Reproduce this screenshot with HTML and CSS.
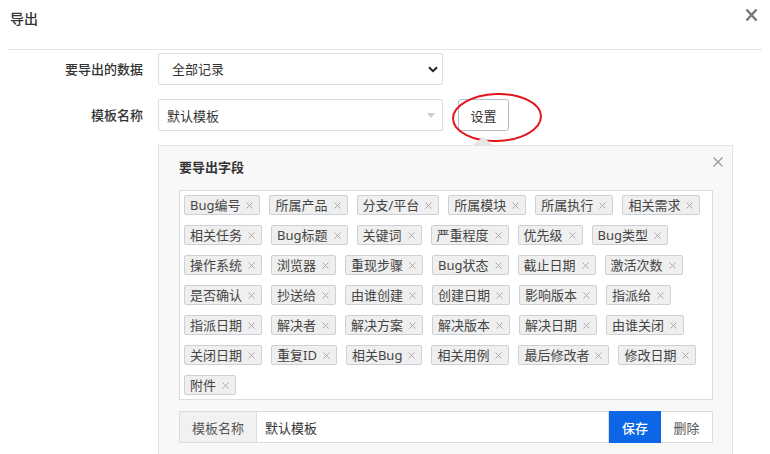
FILE: index.html
```html
<!DOCTYPE html>
<html lang="zh-CN">
<head>
<meta charset="utf-8">
<title>导出</title>
<link rel="stylesheet" href="styles.css">
</head>
<body>
<div class="dialog">
  <div class="dialog-header">
    <h4 class="dialog-title">导出</h4>
    <button class="dialog-close" type="button" aria-label="关闭">
      <svg width="13" height="14" viewBox="0 0 13 14"><path d="M1.5 1.5L11.5 12.5M11.5 1.5L1.5 12.5" stroke="#777" stroke-width="2.4" fill="none"/></svg>
    </button>
  </div>
  <div class="dialog-body">
    <div class="form-row">
      <label class="form-label">要导出的数据</label>
      <div class="select-wrap">
        <select class="form-select"><option>全部记录</option></select>
        <svg class="select-arrow" width="10" height="7" viewBox="0 0 10 7"><path d="M1 1.2L5 5.2L9 1.2" stroke="#222" stroke-width="2" fill="none"/></svg>
      </div>
    </div>
    <div class="form-row">
      <label class="form-label">模板名称</label>
      <div class="chosen"><span>默认模板</span><span class="chosen-caret"></span></div>
      <div class="setting-wrap">
        <button class="btn" type="button">设置</button>
        <svg class="annot" width="92" height="52" viewBox="0 0 92 52"><ellipse cx="46" cy="25.5" rx="44" ry="23.5" transform="rotate(-2 46 25.5)" stroke="#e3161e" stroke-width="2" fill="none"/></svg>
      </div>
    </div>
    <div class="form-row form-row-top">
      <div class="form-label"></div>
      <div class="panel">
        <span class="panel-arrow"></span>
        <button class="panel-close" type="button" aria-label="关闭">
          <svg width="10" height="10" viewBox="0 0 10 10"><path d="M0.5 0.5L9.5 9.5M9.5 0.5L0.5 9.5" stroke="#999" stroke-width="1.2" fill="none"/></svg>
        </button>
        <div class="panel-title">要导出字段</div>
        <div class="tags" id="tags"></div>
        <div class="input-group">
          <span class="addon">模板名称</span>
          <span class="group-input">默认模板</span>
          <button class="btn-save" type="button">保存</button>
          <button class="btn-delete" type="button">删除</button>
        </div>
      </div>
    </div>
  </div>
</div>
<script>
  var fields = ["Bug编号","所属产品","分支/平台","所属模块","所属执行","相关需求",
    "相关任务","Bug标题","关键词","严重程度","优先级","Bug类型",
    "操作系统","浏览器","重现步骤","Bug状态","截止日期","激活次数",
    "是否确认","抄送给","由谁创建","创建日期","影响版本","指派给",
    "指派日期","解决者","解决方案","解决版本","解决日期","由谁关闭",
    "关闭日期","重复ID","相关Bug","相关用例","最后修改者","修改日期","附件"];
  var box = document.getElementById("tags");
  fields.forEach(function (f) {
    var t = document.createElement("span");
    t.className = "tag";
    t.innerHTML = '<span class="tag-text"></span><svg class="tag-remove" width="7" height="7" viewBox="0 0 7 7"><path d="M0.5 0.5L6.5 6.5M6.5 0.5L0.5 6.5" stroke="#aaa" stroke-width="1" fill="none"/></svg>';
    t.firstChild.textContent = f;
    box.appendChild(t);
  });
</script>
</body>
</html>
```
FILE: styles.css
```css
* { box-sizing: border-box; }
html, body { margin: 0; padding: 0; background: #fff; }
body {
  font-family: "Noto Sans", "Noto Sans CJK SC", sans-serif;
  font-size: 13px;
  color: #333;
  overflow: hidden;
}
button { font-family: inherit; font-size: inherit; cursor: pointer; }

.dialog { padding: 0 8px; }
.dialog-header {
  display: flex;
  justify-content: space-between;
  align-items: flex-start;
  height: 50px;
  border-bottom: 1px solid #e5e5e5;
}
.dialog-title {
  margin: 0;
  padding: 9px 0 0 2px;
  font-size: 14px;
  line-height: 20px;
  font-weight: 500;
  color: #333;
}
.dialog-close {
  border: 0;
  background: none;
  padding: 0;
  margin: 8px 4px 0 0;
  width: 13px;
  height: 14px;
  display: flex;
}

.dialog-body { padding-top: 3px; }
.form-row { display: flex; align-items: center; }
.form-row + .form-row { margin-top: 14px; }
.form-row-top { align-items: flex-start; }
.form-label {
  flex: none;
  width: 150px;
  padding-right: 15px;
  text-align: right;
  font-weight: 500;
  color: #333;
  line-height: 20px;
}

.select-wrap { position: relative; width: 285px; height: 32px; }
.form-select {
  width: 100%;
  height: 32px;
  appearance: none;
  -webkit-appearance: none;
  border: 1px solid #ddd;
  border-radius: 2px;
  background: #fff;
  padding: 0 0 0 13px;
  font-family: inherit;
  font-size: 13px;
  color: #333;
  outline: none;
}
.select-arrow { position: absolute; right: 5px; top: 13px; pointer-events: none; }

.chosen {
  width: 285px;
  height: 32px;
  border: 1px solid #ddd;
  border-radius: 2px;
  background: #fff;
  display: flex;
  align-items: center;
  justify-content: space-between;
  padding: 0 7px 0 8px;
  color: #333;
}
.chosen-caret {
  width: 0;
  height: 0;
  border-left: 4px solid transparent;
  border-right: 4px solid transparent;
  border-top: 5px solid #d0d0d0;
}

.setting-wrap { position: relative; margin-left: 15px; }
.btn {
  width: 51px;
  height: 32px;
  border: 1px solid #b5bdc9;
  border-radius: 3px;
  background: #fff;
  color: #333;
  padding: 0;
  display: block;
}
.annot { position: absolute; left: -7px; top: -7px; pointer-events: none; overflow: visible; }

.panel {
  position: relative;
  width: 575px;
  border: 1px solid #e3e3e3;
  background: #f8f8f8;
  padding: 11px 19px 20px 20px;
}
.panel-arrow {
  position: absolute;
  left: 314px;
  top: -9px;
  width: 0;
  height: 0;
  border-left: 10px solid transparent;
  border-right: 10px solid transparent;
  border-bottom: 8px solid #e6e6e6;
}
.panel-close {
  position: absolute;
  right: 9px;
  top: 11px;
  border: 0;
  background: none;
  padding: 0;
  width: 10px;
  height: 10px;
  display: flex;
}
.panel-title {
  font-weight: bold;
  line-height: 20px;
  margin-bottom: 13px;
  color: #333;
}

.tags {
  background: #fff;
  border: 1px solid #ddd;
  padding: 4px 0 4px 4px;
  display: flex;
  flex-wrap: wrap;
  gap: 10px 9px;
}
.tag {
  display: inline-flex;
  align-items: center;
  height: 20px;
  border: 1px solid #cdd0d7;
  border-radius: 2px;
  background: #efefef;
  padding: 0 6px 0 5px;
  color: #444;
  line-height: 18px;
  white-space: nowrap;
}
.tag-remove { margin-left: 6px; flex: none; }

.input-group { display: flex; height: 32px; margin-top: 11px; }
.addon {
  display: flex;
  align-items: center;
  padding: 0 12px;
  border: 1px solid #ddd;
  background: #f1f1f1;
  color: #555;
}
.group-input {
  flex: 1;
  display: flex;
  align-items: center;
  padding: 0 8px;
  border: 1px solid #ddd;
  border-left: 0;
  background: #fff;
  color: #333;
}
.btn-save {
  width: 52px;
  border: 1px solid #0d66e6;
  background: #0d66e6;
  color: #fff;
  font-weight: 500;
  padding: 0;
}
.btn-delete {
  width: 52px;
  border: 1px solid #ddd;
  border-left: 0;
  background: #fff;
  color: #555;
  padding: 0;
}
```
